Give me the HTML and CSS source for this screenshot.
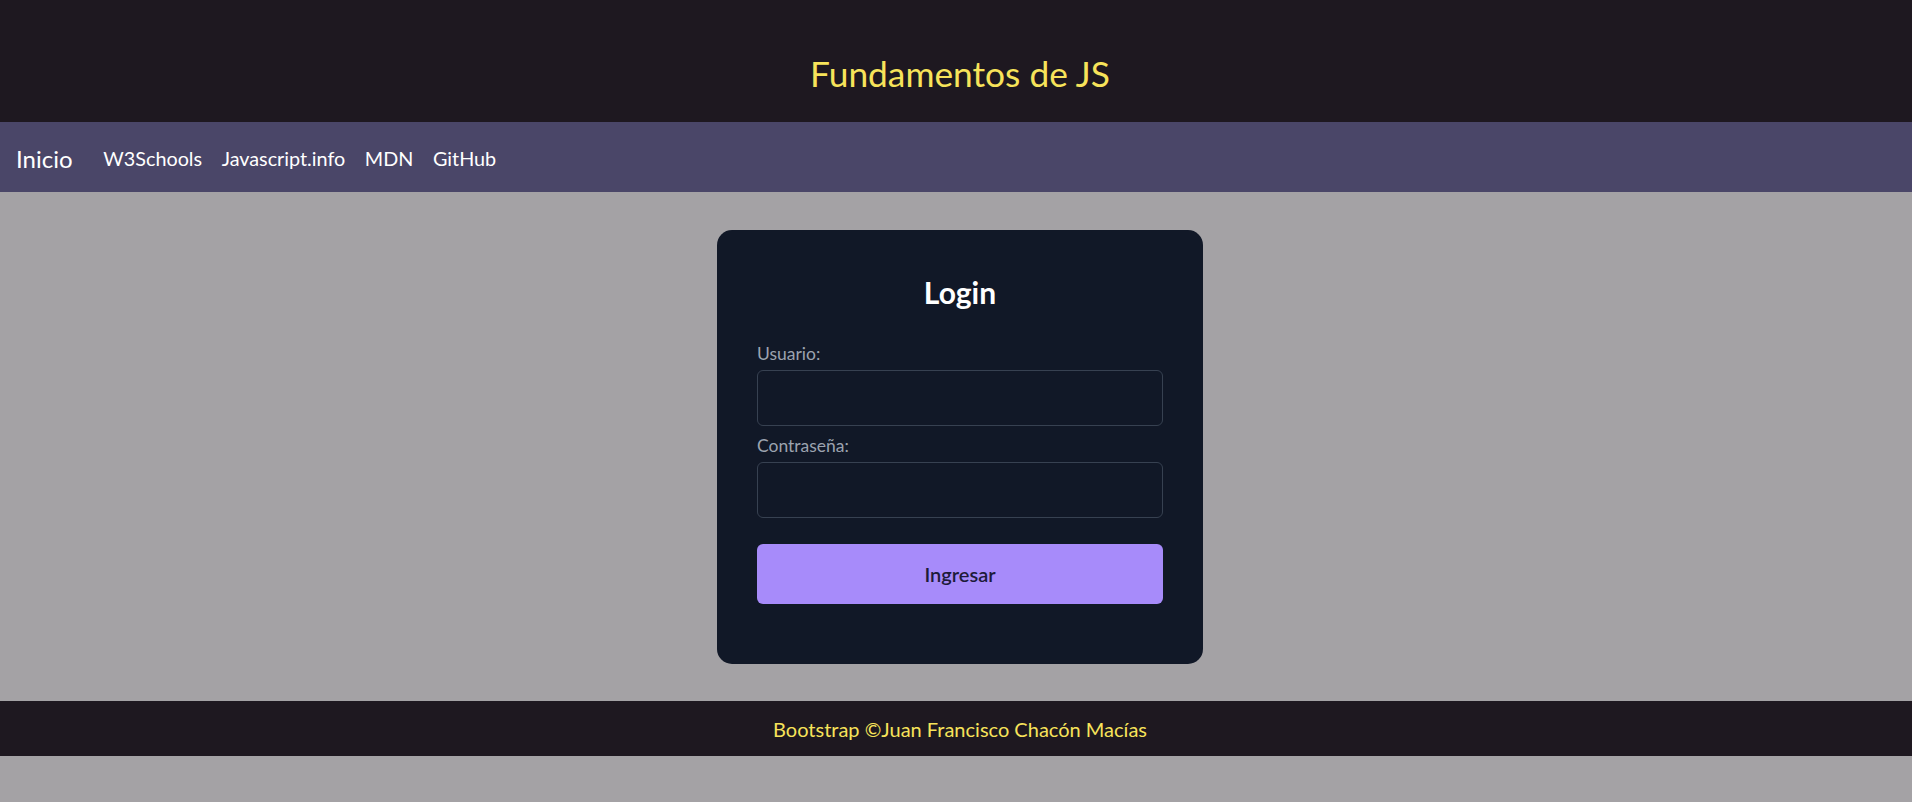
FILE: index.html
```html
<!DOCTYPE html>
<html lang="es">
<head>
<meta charset="utf-8">
<title>Fundamentos de JS</title>
<link rel="stylesheet" href="styles.css">
</head>
<body>
<div class="page">
  <header class="site-header">
    <h1 class="site-title">Fundamentos de JS</h1>
  </header>
  <nav class="navbar">
    <a class="brand" href="#">Inicio</a>
    <ul class="nav-links">
      <li><a href="#">W3Schools</a></li>
      <li><a href="#">Javascript.info</a></li>
      <li><a href="#">MDN</a></li>
      <li><a href="#">GitHub</a></li>
    </ul>
  </nav>
  <main class="main">
    <form class="card">
      <h2 class="card-title">Login</h2>
      <div class="field">
        <label class="field-label" for="user">Usuario:</label>
        <input class="field-input" id="user" type="text">
      </div>
      <div class="field">
        <label class="field-label" for="pass">Contraseña:</label>
        <input class="field-input" id="pass" type="password">
      </div>
      <button class="btn" type="button">Ingresar</button>
    </form>
  </main>
  <footer class="site-footer">Bootstrap ©Juan Francisco Chacón Macías</footer>
</div>
</body>
</html>
```
FILE: styles.css
```css
html {
  overflow: hidden;
}
body {
  margin: 0;
  background: #a4a2a5;
  font-family: "Segoe UI", Lato, "Noto Sans", sans-serif;
}
.page {
  width: 1920px;
}
.site-header {
  height: 122px;
  box-sizing: border-box;
  padding-top: 53px;
  background: #1e1820;
}
.site-title {
  margin: 0;
  text-align: center;
  font-size: 35.3px;
  font-weight: 400;
  line-height: 1.2;
  color: #f7e35a;
}
.navbar {
  height: 70px;
  box-sizing: border-box;
  display: flex;
  align-items: center;
  padding-left: 16px;
  background: #4a4668;
}
.brand {
  font-size: 24px;
  line-height: 1.2;
  padding-top: 4px;
  color: #ffffff;
  text-decoration: none;
  margin-right: 21px;
}
.nav-links {
  display: flex;
  list-style: none;
  margin: 0;
  padding: 3px 0 0;
}
.nav-links a {
  display: block;
  padding: 0 9.8px;
  font-size: 19.8px;
  line-height: 1.2;
  color: #ffffff;
  text-decoration: none;
}
.main {
  display: flex;
  justify-content: center;
  padding: 38px 0 37px;
}
.card {
  width: 486px;
  box-sizing: border-box;
  padding: 40px 40px 60px;
  background: #111827;
  border-radius: 15px;
}
.card-title {
  margin: 0 0 26px;
  text-align: center;
  font-size: 30px;
  line-height: 45px;
  font-weight: 700;
  color: #ffffff;
}
.field {
  margin-bottom: 7px;
}
.field-label {
  display: block;
  margin-bottom: 4px;
  font-size: 17.5px;
  line-height: 25px;
  color: #9ca3af;
}
.field-input {
  display: block;
  width: 100%;
  height: 56px;
  box-sizing: border-box;
  margin: 0;
  background: #111827;
  border: 1px solid #374151;
  border-radius: 6px;
  color: #ffffff;
  font: inherit;
}
.btn {
  display: block;
  width: 100%;
  height: 60px;
  margin-top: 26px;
  border: 0;
  border-radius: 6px;
  background: #a78bfa;
  color: #1e1b3a;
  font-family: inherit;
  font-size: 20px;
  font-weight: 600;
}
.site-footer {
  height: 55px;
  display: flex;
  align-items: center;
  justify-content: center;
  background: #1e1820;
  color: #f7e35a;
  font-size: 20px;
  line-height: 1.2;
}
```
